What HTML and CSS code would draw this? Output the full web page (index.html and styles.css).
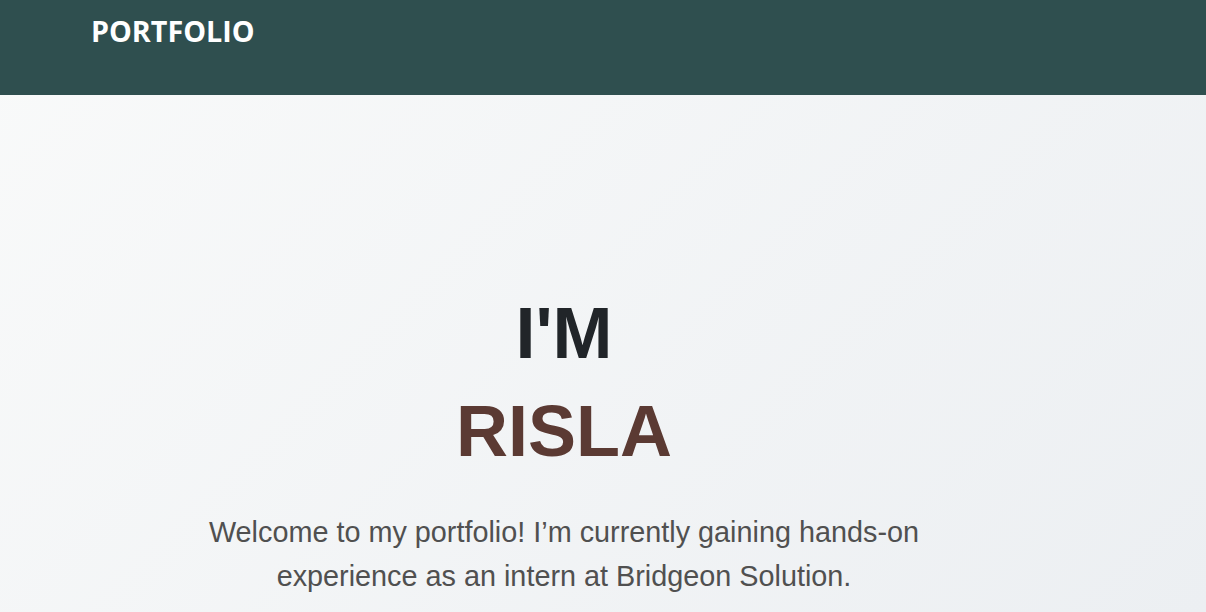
FILE: index.html
```html
<!DOCTYPE html>
<html lang="en">
<head>
<meta charset="utf-8">
<title>Portfolio</title>
<link rel="stylesheet" href="styles.css">
</head>
<body>
<header class="navbar">
  <a class="brand" href="#">PORTFOLIO</a>
</header>
<main class="hero">
  <div class="hero-text">
    <h1 class="title"><span class="im">I'M</span><span class="name">RISLA</span></h1>
    <p class="intro">Welcome to my portfolio! I’m currently gaining hands-on experience as an intern at Bridgeon Solution.</p>
  </div>
</main>
</body>
</html>
```
FILE: styles.css
```css
* { box-sizing: border-box; }
html, body { margin: 0; padding: 0; }
body {
  width: 1206px;
  height: 612px;
  overflow: hidden;
  font-family: "Liberation Sans", Arial, sans-serif;
  background: linear-gradient(135deg, #f9fafa 0%, #eceff2 100%);
}
.navbar {
  height: 95px;
  background: #2f4f4f;
  padding: 11px 0 0 91px;
}
.brand {
  font-family: "Open Sans", "Noto Sans", sans-serif;
  font-weight: 700;
  font-size: 28.7px;
  line-height: 40px;
  color: #ffffff;
  text-decoration: none;
}
.hero {
  padding: 189px 78px 0 0;
}
.hero-text {
  display: flex;
  flex-direction: column;
  align-items: center;
  text-align: center;
}
.title {
  margin: 0;
  font-size: 72px;
  line-height: 98px;
  font-weight: 700;
}
.im { display: block; color: #212529; }
.name { display: block; color: #5b3a33; }
.intro {
  margin: 30px 0 0;
  max-width: 780px;
  font-size: 28.8px;
  line-height: 44px;
  color: #505050;
}
```
